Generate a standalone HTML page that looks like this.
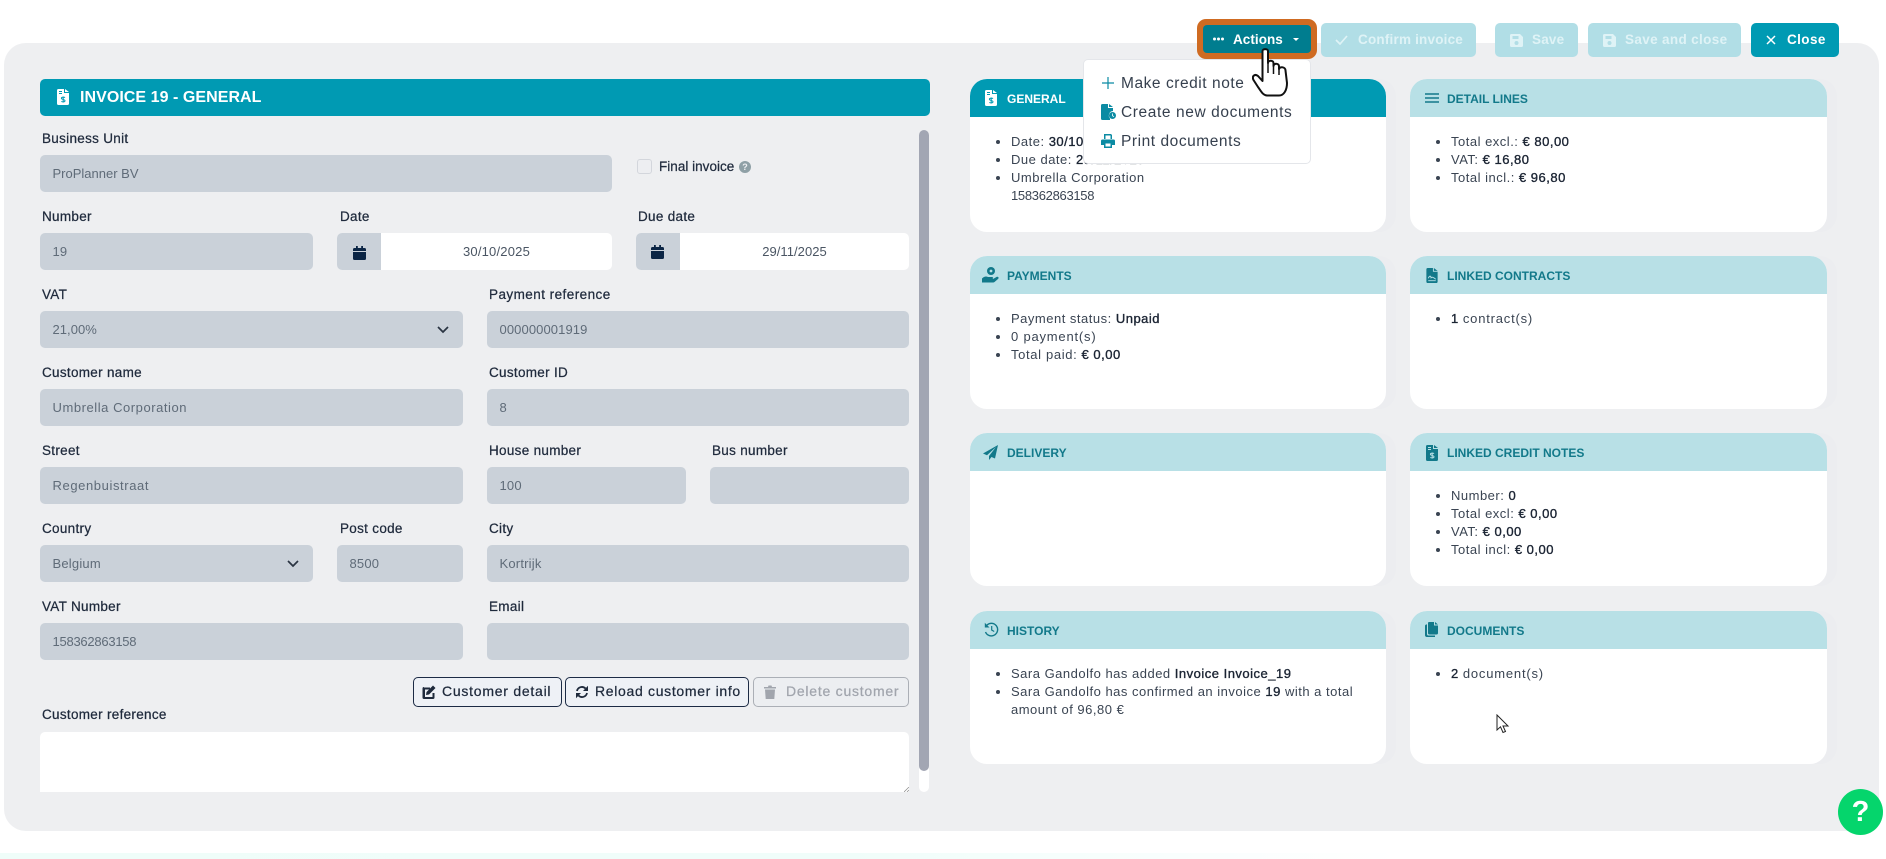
<!DOCTYPE html>
<html lang="en"><head><meta charset="utf-8"><title>Invoice 19 - General</title>
<style>
html,body{margin:0;padding:0;background:#fff}
body{width:1886px;height:859px;position:relative;overflow:hidden;font-family:"Liberation Sans",sans-serif;color:#24303f}
.a,.t,.f,.card,.b,.i{position:absolute}
.t{white-space:nowrap;line-height:18px}
.l{font-size:13.5px;letter-spacing:.3px;color:#1f2a3c;-webkit-text-stroke:.25px #1f2a3c}
.f{background:#cad1d9;border-radius:5px;height:37px;line-height:37px;font-size:13px;letter-spacing:.2px;color:#5f6b78;box-sizing:border-box;padding-left:12.5px}
.w{background:#fff;text-align:center;padding:0 0 0 44px;color:#4a5563}
.w::before{content:"";position:absolute;left:0;top:0;bottom:0;width:44px;background:#cad1d9;border-radius:5px 0 0 5px}
.card{width:416px;height:153px;background:#fff;border-radius:17px;overflow:hidden;box-shadow:10px 0 0 #ecedf0}
.card.r{width:417px}
.h{height:38px;background:#b8e0e6;color:#12798a;font-size:12px;font-weight:bold;line-height:40px;padding-left:37px;letter-spacing:0}
.h.d{background:#009ab3;color:#fff}
.card ul{margin:0;padding:16px 0 0 41px;font-size:13px;line-height:18px;letter-spacing:.5px;color:#3a4452;white-space:nowrap}
.card b{font-weight:normal;color:#1b2433;-webkit-text-stroke:.35px #1b2433}
.b{top:23px;height:34px;border-radius:5px;font-size:13.5px;font-weight:bold;line-height:34px;color:#dff3f6;background:#b1dee6}
.b span{position:absolute;top:0;white-space:nowrap}
.o{top:677px;height:30px;box-sizing:border-box;border:1px solid #1c2b45;border-radius:5px;background:#eef1f6;font-size:14px;line-height:27px;color:#1f2a3c;-webkit-text-stroke:.25px #1f2a3c}
.o span{position:absolute;top:0;white-space:nowrap}
.m{font-size:15.5px;letter-spacing:.55px;color:#36404e}
svg{display:block}
</style></head><body>
<svg width="0" height="0" style="position:absolute"><defs>
<symbol id="fd" viewBox="0 0 12 16"><path fill="currentColor" d="M0 1.500A1.500 1.500 0 0 1 1.500 0H7v4h5v10.500a1.500 1.500 0 0 1-1.500 1.500h-9A1.500 1.500 0 0 1 0 14.500zM8 0l4 3H8z"/><path fill="none" stroke="var(--b)" stroke-width="1" d="M8 8.600c-.8-.8-3.600-.7-3.600.7s3.600.9 3.600 2.400-2.800 1.500-3.600.6M6.200 7.500v6M2 2.500h3M2 4.500h3"/></symbol>
<symbol id="cal" viewBox="0 0 13 14"><path fill="currentColor" d="M3 0h1.800v2h3.400V0H10v2h1.500A1.500 1.500 0 0 1 13 3.500V5H0V3.500A1.500 1.500 0 0 1 1.500 2H3zM0 6h13v6.500a1.500 1.500 0 0 1-1.500 1.500h-10A1.500 1.500 0 0 1 0 12.500z"/></symbol>
<symbol id="sv" viewBox="0 0 13 13"><path fill="currentColor" d="M1.500 0H10l3 3v8.500a1.500 1.500 0 0 1-1.500 1.500h-10A1.500 1.500 0 0 1 0 11.500v-10A1.500 1.500 0 0 1 1.500 0z"/><path fill="var(--b)" d="M2.500 2h6v3h-6z"/><circle cx="6.500" cy="9" r="2" fill="var(--b)"/></symbol>
</defs></svg>

<!-- main panel -->
<div class="a" style="left:4px;top:43px;width:1875px;height:788px;background:#eeeff1;border-radius:22px"></div>
<div class="a" style="left:0;top:853px;width:1400px;height:6px;background:linear-gradient(90deg,#effdf9,#f0fdfa 60%,#fff)"></div>

<!-- left header -->
<div class="a" style="left:40px;top:79px;width:890px;height:37px;background:#009ab3;border-radius:5px"></div>
<svg class="i" style="left:57px;top:89px;color:#fff;--b:#009ab3" width="12" height="16"><use href="#fd"/></svg>
<div class="t" style="left:80px;top:89px;font-size:16px;font-weight:bold;color:#fff;letter-spacing:.05px">INVOICE 19 - GENERAL</div>

<!-- scrollbar -->
<div class="a" style="left:919px;top:130px;width:10px;height:662px;background:#fff;border-radius:5px"></div>
<div class="a" style="left:919px;top:130px;width:10px;height:641px;background:#a2a6b3;border-radius:5px"></div>

<!-- form -->
<div class="t l" style="left:42px;top:130px">Business Unit</div>
<div class="f" style="left:40px;top:155px;width:572px;letter-spacing:0">ProPlanner BV</div>
<div class="a" style="left:637px;top:159px;width:15px;height:15px;box-sizing:border-box;border:1px solid #d3d6dc;border-radius:3px;background:#edeef1"></div>
<div class="t l" style="left:659px;top:158px;letter-spacing:.02px">Final invoice</div>
<div class="a" style="left:739px;top:161px;width:12px;height:12px;border-radius:50%;background:#8fa0a6;color:#eeeff2;font-size:9px;font-weight:bold;line-height:12px;text-align:center">?</div>

<div class="t l" style="left:42px;top:208px">Number</div>
<div class="t l" style="left:340px;top:208px">Date</div>
<div class="t l" style="left:638px;top:208px">Due date</div>
<div class="f" style="left:40px;top:233px;width:273px">19</div>
<div class="f w" style="left:337px;top:233px;width:275px">30/10/2025</div>
<svg class="i" style="left:353px;top:246px;color:#0b2545" width="13" height="14"><use href="#cal"/></svg>
<div class="f w" style="left:636px;top:233px;width:273px;letter-spacing:.05px">29/11/2025</div>
<svg class="i" style="left:651px;top:245px;color:#0b2545" width="13" height="14"><use href="#cal"/></svg>

<div class="t l" style="left:42px;top:286px">VAT</div>
<div class="t l" style="left:489px;top:286px;letter-spacing:.45px">Payment reference</div>
<div class="f" style="left:40px;top:311px;width:423px;letter-spacing:.05px">21,00%</div>
<svg class="i" style="left:437px;top:326px" width="12" height="8"><path d="M1 1l5 5 5-5" fill="none" stroke="#2a3442" stroke-width="1.700"/></svg>
<div class="f" style="left:487px;top:311px;width:422px;letter-spacing:.1px">000000001919</div>

<div class="t l" style="left:42px;top:364px">Customer name</div>
<div class="t l" style="left:489px;top:364px">Customer ID</div>
<div class="f" style="left:40px;top:389px;width:423px;letter-spacing:.55px">Umbrella Corporation</div>
<div class="f" style="left:487px;top:389px;width:422px">8</div>

<div class="t l" style="left:42px;top:442px">Street</div>
<div class="t l" style="left:489px;top:442px">House number</div>
<div class="t l" style="left:712px;top:442px">Bus number</div>
<div class="f" style="left:40px;top:467px;width:423px;letter-spacing:.6px">Regenbuistraat</div>
<div class="f" style="left:487px;top:467px;width:199px">100</div>
<div class="f" style="left:710px;top:467px;width:199px"></div>

<div class="t l" style="left:42px;top:520px">Country</div>
<div class="t l" style="left:340px;top:520px">Post code</div>
<div class="t l" style="left:489px;top:520px">City</div>
<div class="f" style="left:40px;top:545px;width:273px">Belgium</div>
<svg class="i" style="left:287px;top:560px" width="12" height="8"><path d="M1 1l5 5 5-5" fill="none" stroke="#2a3442" stroke-width="1.700"/></svg>
<div class="f" style="left:337px;top:545px;width:126px">8500</div>
<div class="f" style="left:487px;top:545px;width:422px">Kortrijk</div>

<div class="t l" style="left:42px;top:598px">VAT Number</div>
<div class="t l" style="left:489px;top:598px">Email</div>
<div class="f" style="left:40px;top:623px;width:423px;letter-spacing:-.25px">158362863158</div>
<div class="f" style="left:487px;top:623px;width:422px"></div>

<div class="a o" style="left:413px;width:149px"><span style="left:28px;letter-spacing:.75px">Customer detail</span>
<svg class="i" style="left:8px;top:7px" width="14" height="14"><path d="M2 2.500h6v2H3v7.500h7.500V8h2v4.500a1.500 1.500 0 0 1-1.500 1.500H2a1.500 1.500 0 0 1-1.500-1.500v-9A1.500 1.500 0 0 1 2 2zM11 .5l2.500 2.500-6.500 6.500-3 .5.500-3z" fill="#1f2a3c"/></svg></div>
<div class="a o" style="left:565px;width:184px"><span style="left:29px;letter-spacing:.68px">Reload customer info</span>
<svg class="i" style="left:9px;top:7px" width="14" height="14"><path d="M2 6a5 5 0 0 1 8.500-2.500M12 8a5 5 0 0 1-8.500 2.500" fill="none" stroke="#1f2a3c" stroke-width="1.800"/><path d="M13 .8V6H8zM1 13.200V8h5z" fill="#1f2a3c"/></svg></div>
<div class="a o" style="left:753px;width:156px;border-color:#abafb6;color:#a1a5ad;background:#eceef1;-webkit-text-stroke:.25px #a1a5ad"><span style="left:32px;letter-spacing:.76px">Delete customer</span>
<svg class="i" style="left:10px;top:7px" width="12" height="14"><path d="M0 2h4l.5-1.500h3L8 2h4v1.500H0zM1 4.500h10L10.300 14H1.700z" fill="#a1a5ad"/></svg></div>

<div class="t l" style="left:42px;top:706px">Customer reference</div>
<div class="a" style="left:40px;top:732px;width:869px;height:60px;background:#fff;border-radius:5px 5px 0 0"></div>
<svg class="i" style="left:904px;top:787px" width="5" height="5"><path d="M0 5L5 0M3 5L5 3" stroke="#888" stroke-width=".7"/></svg>

<!-- cards left -->
<div class="card" style="left:970px;top:79px"><div class="h d">GENERAL</div><ul><li>Date: <b>30/10/2025</b></li><li>Due date: <b>29/11/2025</b></li><li>Umbrella Corporation<br><span style="letter-spacing:-.3px">158362863158</span></li></ul></div>
<div class="card" style="left:970px;top:256px"><div class="h">PAYMENTS</div><ul><li>Payment status: <b>Unpaid</b></li><li><span style="letter-spacing:.8px">0 payment(s)</span></li><li><span style="letter-spacing:.65px">Total paid:</span> <b>€ 0,00</b></li></ul></div>
<div class="card" style="left:970px;top:433px"><div class="h">DELIVERY</div></div>
<div class="card" style="left:970px;top:611px"><div class="h">HISTORY</div><ul><li>Sara Gandolfo has added <b>Invoice Invoice_19</b></li><li>Sara Gandolfo has confirmed an invoice <b>19</b> with a total<br>amount of 96,80 €</li></ul></div>

<!-- cards right -->
<div class="card r" style="left:1410px;top:79px"><div class="h">DETAIL LINES</div><ul><li>Total excl.: <b>€ 80,00</b></li><li>VAT: <b>€ 16,80</b></li><li>Total incl.: <b>€ 96,80</b></li></ul></div>
<div class="card r" style="left:1410px;top:256px"><div class="h">LINKED CONTRACTS</div><ul><li><b>1</b> <span style="letter-spacing:.8px">contract(s)</span></li></ul></div>
<div class="card r" style="left:1410px;top:433px"><div class="h">LINKED CREDIT NOTES</div><ul><li>Number: <b>0</b></li><li>Total excl: <b>€ 0,00</b></li><li>VAT: <b>€ 0,00</b></li><li>Total incl: <b>€ 0,00</b></li></ul></div>
<div class="card r" style="left:1410px;top:611px"><div class="h">DOCUMENTS</div><ul><li><b>2</b> <span style="letter-spacing:.8px">document(s)</span></li></ul></div>

<!-- card icons -->
<svg class="i" style="left:985px;top:90px;color:#fff;--b:#009ab3" width="12" height="16"><use href="#fd"/></svg>
<svg class="i" style="left:982px;top:267px" width="17" height="16" viewBox="0 0 17 16"><circle cx="9" cy="4" r="4" fill="#12798a"/><circle cx="9" cy="4" r="1.400" fill="#b8e0e6"/><path d="M0 11.500c2-2 4-2.500 6-1.500h4c1.500 0 1.500 2 0 2H7.500h3.500l3.500-2c1.500-.8 3 .8 1.500 2l-3.500 3c-.5.400-1 .500-1.500.500H0z" fill="#12798a"/></svg>
<svg class="i" style="left:983px;top:445px" width="15" height="15" viewBox="0 0 15 15"><path d="M15 0L0 8.500l4 1.700L13 2 6 11v4l2.500-3 3.500 1.500z" fill="#12798a"/></svg>
<svg class="i" style="left:984px;top:622px" width="15" height="15" viewBox="0 0 15 15"><path d="M3 3a6.300 6.300 0 1 1-1.500 7" fill="none" stroke="#12798a" stroke-width="1.400"/><path d="M.8.800v4.700h4.700z" fill="#12798a"/><path d="M7.700 4v4l2.500 1.500" fill="none" stroke="#12798a" stroke-width="1.200"/></svg>
<svg class="i" style="left:1425px;top:93px" width="14" height="10"><path d="M0 1h14M0 5h14M0 9h14" stroke="#12798a" stroke-width="1.500"/></svg>
<svg class="i" style="left:1426px;top:268px;color:#12798a;--b:#b8e0e6" width="12" height="15" viewBox="0 0 12 16"><path fill="currentColor" d="M0 1.500A1.500 1.500 0 0 1 1.500 0H7v4h5v10.500a1.500 1.500 0 0 1-1.500 1.500h-9A1.500 1.500 0 0 1 0 14.500zM8 0l4 3H8z"/><path d="M2 11c1.500-3 2.500-3 3-.5 1-1 2-1 5 1.500M2 13.500h8" fill="none" stroke="#b8e0e6" stroke-width="1"/></svg>
<svg class="i" style="left:1426px;top:445px;color:#12798a;--b:#b8e0e6" width="12" height="16"><use href="#fd"/></svg>
<svg class="i" style="left:1425px;top:622px" width="13" height="15" viewBox="0 0 13 15"><path d="M4 0h5v3.500h4V11a1.500 1.500 0 0 1-1.500 1.500h-7A1.500 1.500 0 0 1 3 11V1a1 1 0 0 1 1-1zM10 0l3 2.500h-3z" fill="#12798a"/><path d="M2 2.500V12a1.500 1.500 0 0 0 1.500 1.500H10V15H2a2 2 0 0 1-2-2V4a1.500 1.500 0 0 1 2-1.500z" fill="#12798a"/></svg>

<!-- top buttons -->
<div class="a" style="left:1197px;top:19px;width:120px;height:40px;background:#cf6b22;border-radius:9px"></div>
<div class="b" style="left:1203px;top:25px;width:108px;height:28px;line-height:29px;background:#007d8f;color:#fff;border-radius:4px"><span style="left:30px;letter-spacing:.05px">Actions</span>
<svg class="i" style="left:10px;top:12px" width="11" height="4"><circle cx="1.500" cy="2" r="1.500" fill="#fff"/><circle cx="5.500" cy="2" r="1.500" fill="#fff"/><circle cx="9.500" cy="2" r="1.500" fill="#fff"/></svg>
<svg class="i" style="left:90px;top:13px" width="6" height="3"><path d="M0 0h6L3 3z" fill="#fff"/></svg></div>
<div class="b" style="left:1321px;width:155px"><span style="left:37px;letter-spacing:.2px">Confirm invoice</span>
<svg class="i" style="left:14px;top:12px" width="13" height="10"><path d="M1 5l4 4 7-8" fill="none" stroke="#dff3f6" stroke-width="1.700"/></svg></div>
<div class="b" style="left:1495px;width:83px;--b:#b1dee6"><span style="left:37px;letter-spacing:.2px">Save</span>
<svg class="i" style="left:15px;top:11px;color:#dff3f6" width="13" height="13"><use href="#sv"/></svg></div>
<div class="b" style="left:1588px;width:153px;--b:#b1dee6"><span style="left:37px;letter-spacing:.35px">Save and close</span>
<svg class="i" style="left:15px;top:11px;color:#dff3f6" width="13" height="13"><use href="#sv"/></svg></div>
<div class="b" style="left:1751px;width:88px;background:#009ab3;color:#fff"><span style="left:36px;letter-spacing:.4px">Close</span>
<svg class="i" style="left:15px;top:12px" width="10" height="10"><path d="M1 1l8 8M9 1l-8 8" stroke="#fff" stroke-width="1.500"/></svg></div>

<!-- dropdown -->
<div class="a" style="left:1084px;top:60px;width:226px;height:103px;background:#fff;border-radius:4px;box-shadow:0 0 0 1px #e4e6ea"></div>
<div class="t m" style="left:1121px;top:75px">Make credit note</div>
<div class="t m" style="left:1121px;top:104px;letter-spacing:.6px">Create new documents</div>
<div class="t m" style="left:1121px;top:133px">Print documents</div>
<svg class="i" style="left:1102px;top:77px" width="12" height="12"><path d="M6 0v12M0 6h12" stroke="#0b8ba3" stroke-width="1.200"/></svg>
<svg class="i" style="left:1101px;top:104px" width="15" height="16" viewBox="0 0 15 16"><path d="M0 1.500A1.500 1.500 0 0 1 1.500 0H7v4h5v3a4.500 4.500 0 0 0-3 7.500v1.500H1.500A1.500 1.500 0 0 1 0 14.500zM8 0l4 3H8z" fill="#0b8ba3"/><circle cx="11.500" cy="11.500" r="3.500" fill="#0b8ba3"/><path d="M11.500 9.500v2.300l1.500.8" fill="none" stroke="#fff" stroke-width=".8"/></svg>
<svg class="i" style="left:1101px;top:134px" width="14" height="14" viewBox="0 0 14 14"><path d="M3 5V0h7l1 1v4h-1.500V1.500h-5V5zM1.500 5.500h11A1.500 1.500 0 0 1 14 7v4h-3v3H3v-3H0V7a1.500 1.500 0 0 1 1.500-1.500zM4.500 9.500v3h5v-3z" fill="#0b8ba3"/></svg>

<!-- hand cursor -->
<svg class="i" style="left:1252px;top:48px" width="38" height="49" viewBox="0 0 38 49"><path d="M10.500 3C10.500 .5 16 .5 16 3L16 15C16 12 21.500 12 21.500 15L21.500 18C22 15 27 15 27 18.500L27 21C28 18 33.500 19 33.500 22.500L35 35C35 42 32 47.500 27 47.500L15 47.500C11 47.500 9 43 6 39L1.500 32C-.5 28 3 25.500 6 28L10.500 33Z" fill="#fff" stroke="#111" stroke-width="2" stroke-linejoin="round"/><path d="M16 15V25M21.500 18V26M27 21V27" fill="none" stroke="#111" stroke-width="1.500"/></svg>

<!-- arrow cursor -->
<svg class="i" style="left:1496px;top:714px" width="14" height="20"><path d="M1 1V16L4.500 12.800 7 18.500 9.500 17.500 7 12H12Z" fill="#fff" stroke="#222" stroke-width="1"/></svg>

<!-- help -->
<div class="a" style="left:1838px;top:789px;width:45px;height:46px;border-radius:50%;background:#05d56c;color:#fff;font-size:29px;font-weight:bold;line-height:46px;text-align:center">?</div>
</body></html>
